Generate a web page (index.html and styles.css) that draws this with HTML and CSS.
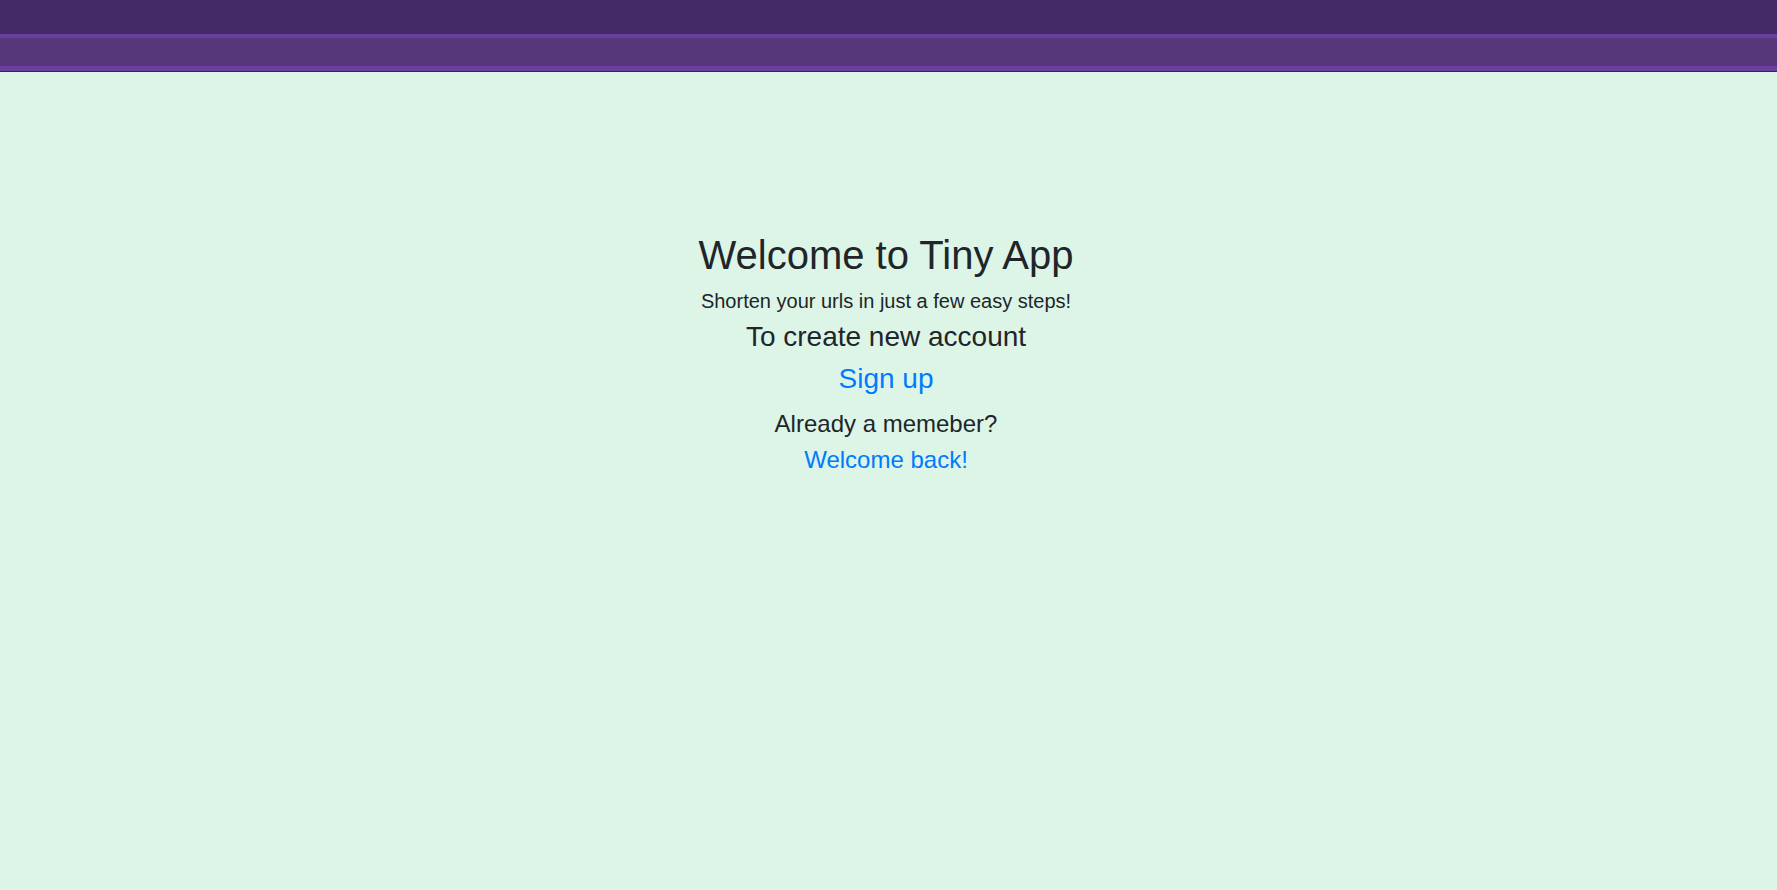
FILE: index.html
```html
<!DOCTYPE html>
<html lang="en">
<head>
<meta charset="utf-8">
<title>Tiny App</title>
<link rel="stylesheet" href="styles.css">
</head>
<body>
<header class="topbar">
  <div class="topbar-dark"></div>
  <div class="topbar-nav"></div>
</header>
<main class="welcome">
  <h1 class="title">Welcome to Tiny App</h1>
  <p class="lead">Shorten your urls in just a few easy steps!</p>
  <h3 class="create">To create new account</h3>
  <a class="signup" href="#">Sign up</a>
  <h4 class="member">Already a memeber?</h4>
  <a class="login" href="#">Welcome back!</a>
</main>
</body>
</html>
```
FILE: styles.css
```css
html, body {
  margin: 0;
  padding: 0;
}
body {
  background: #dcf5e7;
  font-family: "Liberation Sans", Arial, sans-serif;
  color: #212529;
  min-height: 890px;
}
.topbar {
  display: flex;
  flex-direction: column;
  border-bottom: 1px solid #3a2552;
}
.topbar-dark {
  height: 34px;
  background: #452a68;
}
.topbar-nav {
  height: 28px;
  background: #55377a;
  border-top: 4px solid #6b3f9e;
  border-bottom: 5px solid #6b3f9e;
}
.welcome {
  display: flex;
  flex-direction: column;
  align-items: center;
  text-align: center;
  padding-top: 159px;
  padding-right: 5px;
}
.title {
  margin: 0 0 7px;
  font-size: 40px;
  font-weight: 400;
  line-height: 1.2;
}
.lead {
  margin: 0 0 4px;
  font-size: 20px;
  line-height: 1.5;
}
.create {
  margin: 0;
  font-size: 28px;
  font-weight: 400;
  line-height: 1.2;
}
.signup {
  margin-top: 4px;
  color: #007bff;
  text-decoration: none;
  font-size: 28px;
  line-height: 1.5;
}
.member {
  margin: 6px 0 0;
  font-size: 24px;
  font-weight: 400;
  line-height: 1.5;
}
.login {
  color: #007bff;
  text-decoration: none;
  font-size: 24px;
  line-height: 35px;
}
```
